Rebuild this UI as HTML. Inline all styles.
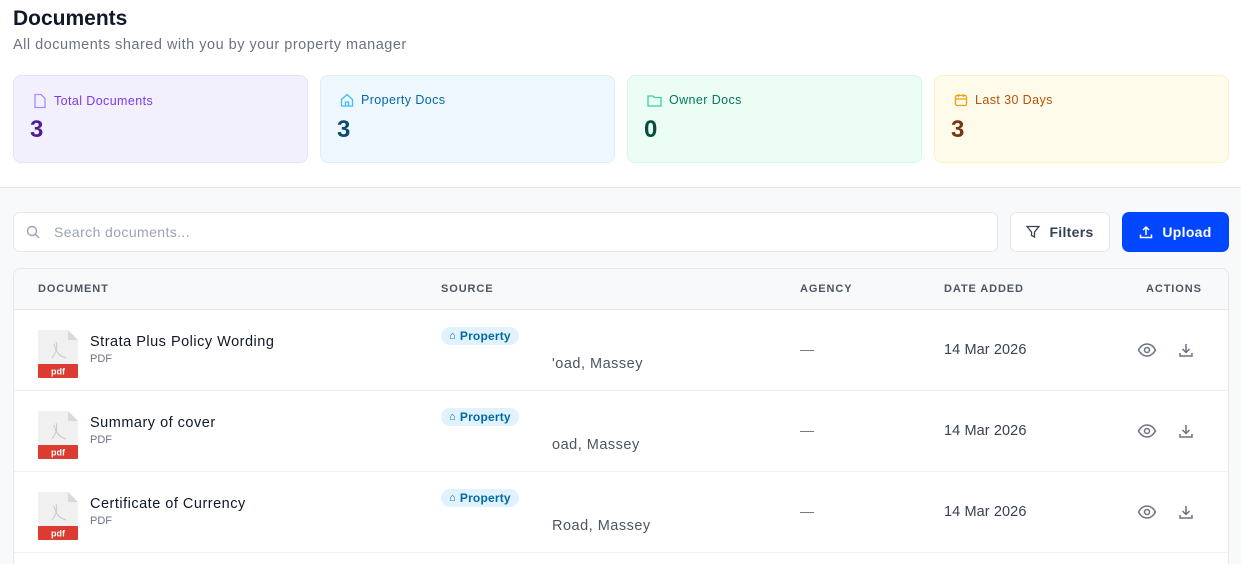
<!DOCTYPE html>
<html style="width:1241px;height:564px;overflow:hidden"><head><style>
*{box-sizing:border-box;margin:0;padding:0}
body{width:1241px;height:564px;overflow:hidden;position:relative;font-family:"Liberation Sans",sans-serif;background:#f8f9fb;color:#111827}
.top{background:#fff;height:188px;border-bottom:1px solid #e5e7eb;position:relative}
h1{position:absolute;left:13px;top:7px;font-size:21px;font-weight:700;color:#111827}
.sub{position:absolute;left:13px;top:37px;font-size:14.5px;color:#6b7280;letter-spacing:.5px}
.card{position:absolute;top:75px;width:295px;height:88px;border-radius:8px;border:1px solid}
.card .l{position:absolute;left:19px;top:17px;font-size:12.5px;display:flex;align-items:center;gap:7px;letter-spacing:.4px}
.card .n{position:absolute;left:16px;top:40px;font-size:24px;font-weight:700}
.abs{position:absolute}
.search{left:13px;top:212px;width:985px;height:40px;background:#fff;border:1px solid #e5e7eb;border-radius:7px;font-size:14px;color:#9ca3af;padding:11px 0 0 40px;letter-spacing:.4px}
.btn{top:212px;height:40px;border-radius:7px;font-size:14px;font-weight:700;display:flex;align-items:center;justify-content:center;gap:9px;letter-spacing:.3px}
.table{left:13px;top:268px;width:1216px;height:296px;background:#fff;border:1px solid #e5e7eb;border-bottom:none;border-radius:8px 8px 0 0;overflow:hidden}
.th{position:absolute;top:14px;font-size:11px;font-weight:700;letter-spacing:.9px;color:#4b5563}
.hd{position:absolute;left:0;top:0;width:100%;height:41px;background:#f8f9fb;border-bottom:1px solid #e5e7eb}
.row{position:absolute;left:0;width:100%;height:81px;border-bottom:1px solid #eef0f2}
.row .t{position:absolute;left:76px;top:24px;font-size:14.5px;color:#111827;letter-spacing:.5px}
.row .p{position:absolute;left:76px;top:43px;font-size:11px;color:#6b7280}
.pill{position:absolute;left:427px;top:17px;background:#e0f2fe;color:#0369a1;font-size:12px;font-weight:700;border-radius:10px;padding:2px 8px;display:flex;align-items:center;gap:4px;letter-spacing:.2px}
.addr{position:absolute;left:538px;top:46px;font-size:14.5px;color:#4b5563;letter-spacing:.5px}
.ag{position:absolute;left:786px;top:31px;font-size:14px;color:#6b7280}
.dt{position:absolute;left:930px;top:32px;font-size:14.5px;color:#374151;letter-spacing:.1px}
.ic{position:absolute;top:32px}
.pdf{position:absolute;left:24px;top:20px;width:40px;height:48px}
</style></head><body>
<div class="top">
<h1>Documents</h1>
<div class="sub">All documents shared with you by your property manager</div>
<div class="card" style="left:13px;background:#f3f0fe;border-color:#e6e0fb"><div class="l" style="color:#7c3aed"><svg width="14" height="16" viewBox="0 0 14 16" fill="none" stroke="#a78bfa" stroke-width="1.3"><path d="M2 1.5h6l4 4v9H2z"/></svg>Total Documents</div><div class="n" style="color:#4c1d95">3</div></div>
<div class="card" style="left:320px;background:#eff7fe;border-color:#dbeefc"><div class="l" style="color:#0369a1"><svg width="14" height="14" viewBox="0 0 14 14" fill="none" stroke="#38bdf8" stroke-width="1.3"><path d="M1.5 6.5L7 1.5l5.5 5V13h-11z M5.5 13V9h3v4"/></svg>Property Docs</div><div class="n" style="color:#0c4a6e">3</div></div>
<div class="card" style="left:627px;background:#ecfdf5;border-color:#d1fae5"><div class="l" style="color:#047857"><svg width="15" height="13" viewBox="0 0 15 13" fill="none" stroke="#34d399" stroke-width="1.3"><path d="M1 2h5l1.5 1.5H14V12H1z"/></svg>Owner Docs</div><div class="n" style="color:#064e3b">0</div></div>
<div class="card" style="left:934px;background:#fffbeb;border-color:#fdf0c4"><div class="l" style="color:#b45309"><svg width="14" height="14" viewBox="0 0 14 14" fill="none" stroke="#f59e0b" stroke-width="1.3"><rect x="1.5" y="2.5" width="11" height="10" rx="1.5"/><path d="M1.5 6h11M4.5 1v3M9.5 1v3"/></svg>Last 30 Days</div><div class="n" style="color:#78350f">3</div></div>
</div>
<div class="abs search">Search documents...</div>
<svg class="abs" style="left:26px;top:225px" width="14" height="14" viewBox="0 0 14 14" fill="none" stroke="#9ca3af" stroke-width="1.4"><circle cx="6" cy="6" r="4.5"/><path d="M9.5 9.5L13 13"/></svg>
<div class="abs btn" style="left:1010px;width:100px;background:#fff;border:1px solid #e5e7eb;color:#374151"><svg width="14" height="14" viewBox="0 0 14 14" fill="none" stroke="#374151" stroke-width="1.3"><path d="M1 1.5h12L8.5 7v5l-3-1.5V7z"/></svg>Filters</div>
<div class="abs btn" style="left:1122px;width:107px;background:#0047ff;color:#fff"><svg width="14" height="14" viewBox="0 0 14 14" fill="none" stroke="#fff" stroke-width="1.5"><path d="M7 10V2M4 5l3-3 3 3M1.5 9.5v3h11v-3"/></svg>Upload</div>
<div class="abs table">
<div class="hd"><div class="th" style="left:24px">DOCUMENT</div><div class="th" style="left:427px">SOURCE</div><div class="th" style="left:786px">AGENCY</div><div class="th" style="left:930px">DATE ADDED</div><div class="th" style="left:1132px">ACTIONS</div></div>
<div class="row" style="top:41px">
<svg class="pdf" viewBox="0 0 40 48"><path d="M0 0h30l10 10v38H0z" fill="#f0f0f0"/><path d="M30 0v10h10z" fill="#d9d9d9"/><path d="M16 14c2 8 5 12 12 14M14 28c4-6 6-10 4-16" stroke="#c8c8c8" fill="none"/><rect y="34" width="40" height="14" rx="1" fill="#dc3b31"/><text x="20" y="44.5" text-anchor="middle" font-size="9" font-weight="700" fill="#fff" font-family="Liberation Sans">pdf</text></svg>
<div class="t">Strata Plus Policy Wording</div><div class="p">PDF</div>
<div class="pill"><span style="font-size:11px">⌂</span>Property</div><div class="addr">'oad, Massey</div>
<div class="ag">—</div><div class="dt">14 Mar 2026</div>
<svg class="ic" style="left:1123px" width="20" height="16" viewBox="0 0 20 16" fill="none" stroke="#6b7280" stroke-width="1.5"><path d="M1.5 8C4 3.5 7 2 10 2s6 1.5 8.5 6C16 12.5 13 14 10 14S4 12.5 1.5 8z"/><circle cx="10" cy="8" r="2.5"/></svg>
<svg class="ic" style="left:1164px" width="16" height="16" viewBox="0 0 16 16" fill="none" stroke="#6b7280" stroke-width="1.5"><path d="M8 2v8M4.5 7L8 10.5 11.5 7M2 11v3h12v-3"/></svg>
</div>
<div class="row" style="top:122px">
<svg class="pdf" viewBox="0 0 40 48"><path d="M0 0h30l10 10v38H0z" fill="#f0f0f0"/><path d="M30 0v10h10z" fill="#d9d9d9"/><path d="M16 14c2 8 5 12 12 14M14 28c4-6 6-10 4-16" stroke="#c8c8c8" fill="none"/><rect y="34" width="40" height="14" rx="1" fill="#dc3b31"/><text x="20" y="44.5" text-anchor="middle" font-size="9" font-weight="700" fill="#fff" font-family="Liberation Sans">pdf</text></svg>
<div class="t">Summary of cover</div><div class="p">PDF</div>
<div class="pill"><span style="font-size:11px">⌂</span>Property</div><div class="addr">oad, Massey</div>
<div class="ag">—</div><div class="dt">14 Mar 2026</div>
<svg class="ic" style="left:1123px" width="20" height="16" viewBox="0 0 20 16" fill="none" stroke="#6b7280" stroke-width="1.5"><path d="M1.5 8C4 3.5 7 2 10 2s6 1.5 8.5 6C16 12.5 13 14 10 14S4 12.5 1.5 8z"/><circle cx="10" cy="8" r="2.5"/></svg>
<svg class="ic" style="left:1164px" width="16" height="16" viewBox="0 0 16 16" fill="none" stroke="#6b7280" stroke-width="1.5"><path d="M8 2v8M4.5 7L8 10.5 11.5 7M2 11v3h12v-3"/></svg>
</div>
<div class="row" style="top:203px">
<svg class="pdf" viewBox="0 0 40 48"><path d="M0 0h30l10 10v38H0z" fill="#f0f0f0"/><path d="M30 0v10h10z" fill="#d9d9d9"/><path d="M16 14c2 8 5 12 12 14M14 28c4-6 6-10 4-16" stroke="#c8c8c8" fill="none"/><rect y="34" width="40" height="14" rx="1" fill="#dc3b31"/><text x="20" y="44.5" text-anchor="middle" font-size="9" font-weight="700" fill="#fff" font-family="Liberation Sans">pdf</text></svg>
<div class="t">Certificate of Currency</div><div class="p">PDF</div>
<div class="pill"><span style="font-size:11px">⌂</span>Property</div><div class="addr">Road, Massey</div>
<div class="ag">—</div><div class="dt">14 Mar 2026</div>
<svg class="ic" style="left:1123px" width="20" height="16" viewBox="0 0 20 16" fill="none" stroke="#6b7280" stroke-width="1.5"><path d="M1.5 8C4 3.5 7 2 10 2s6 1.5 8.5 6C16 12.5 13 14 10 14S4 12.5 1.5 8z"/><circle cx="10" cy="8" r="2.5"/></svg>
<svg class="ic" style="left:1164px" width="16" height="16" viewBox="0 0 16 16" fill="none" stroke="#6b7280" stroke-width="1.5"><path d="M8 2v8M4.5 7L8 10.5 11.5 7M2 11v3h12v-3"/></svg>
</div>
</div>
</body></html>
